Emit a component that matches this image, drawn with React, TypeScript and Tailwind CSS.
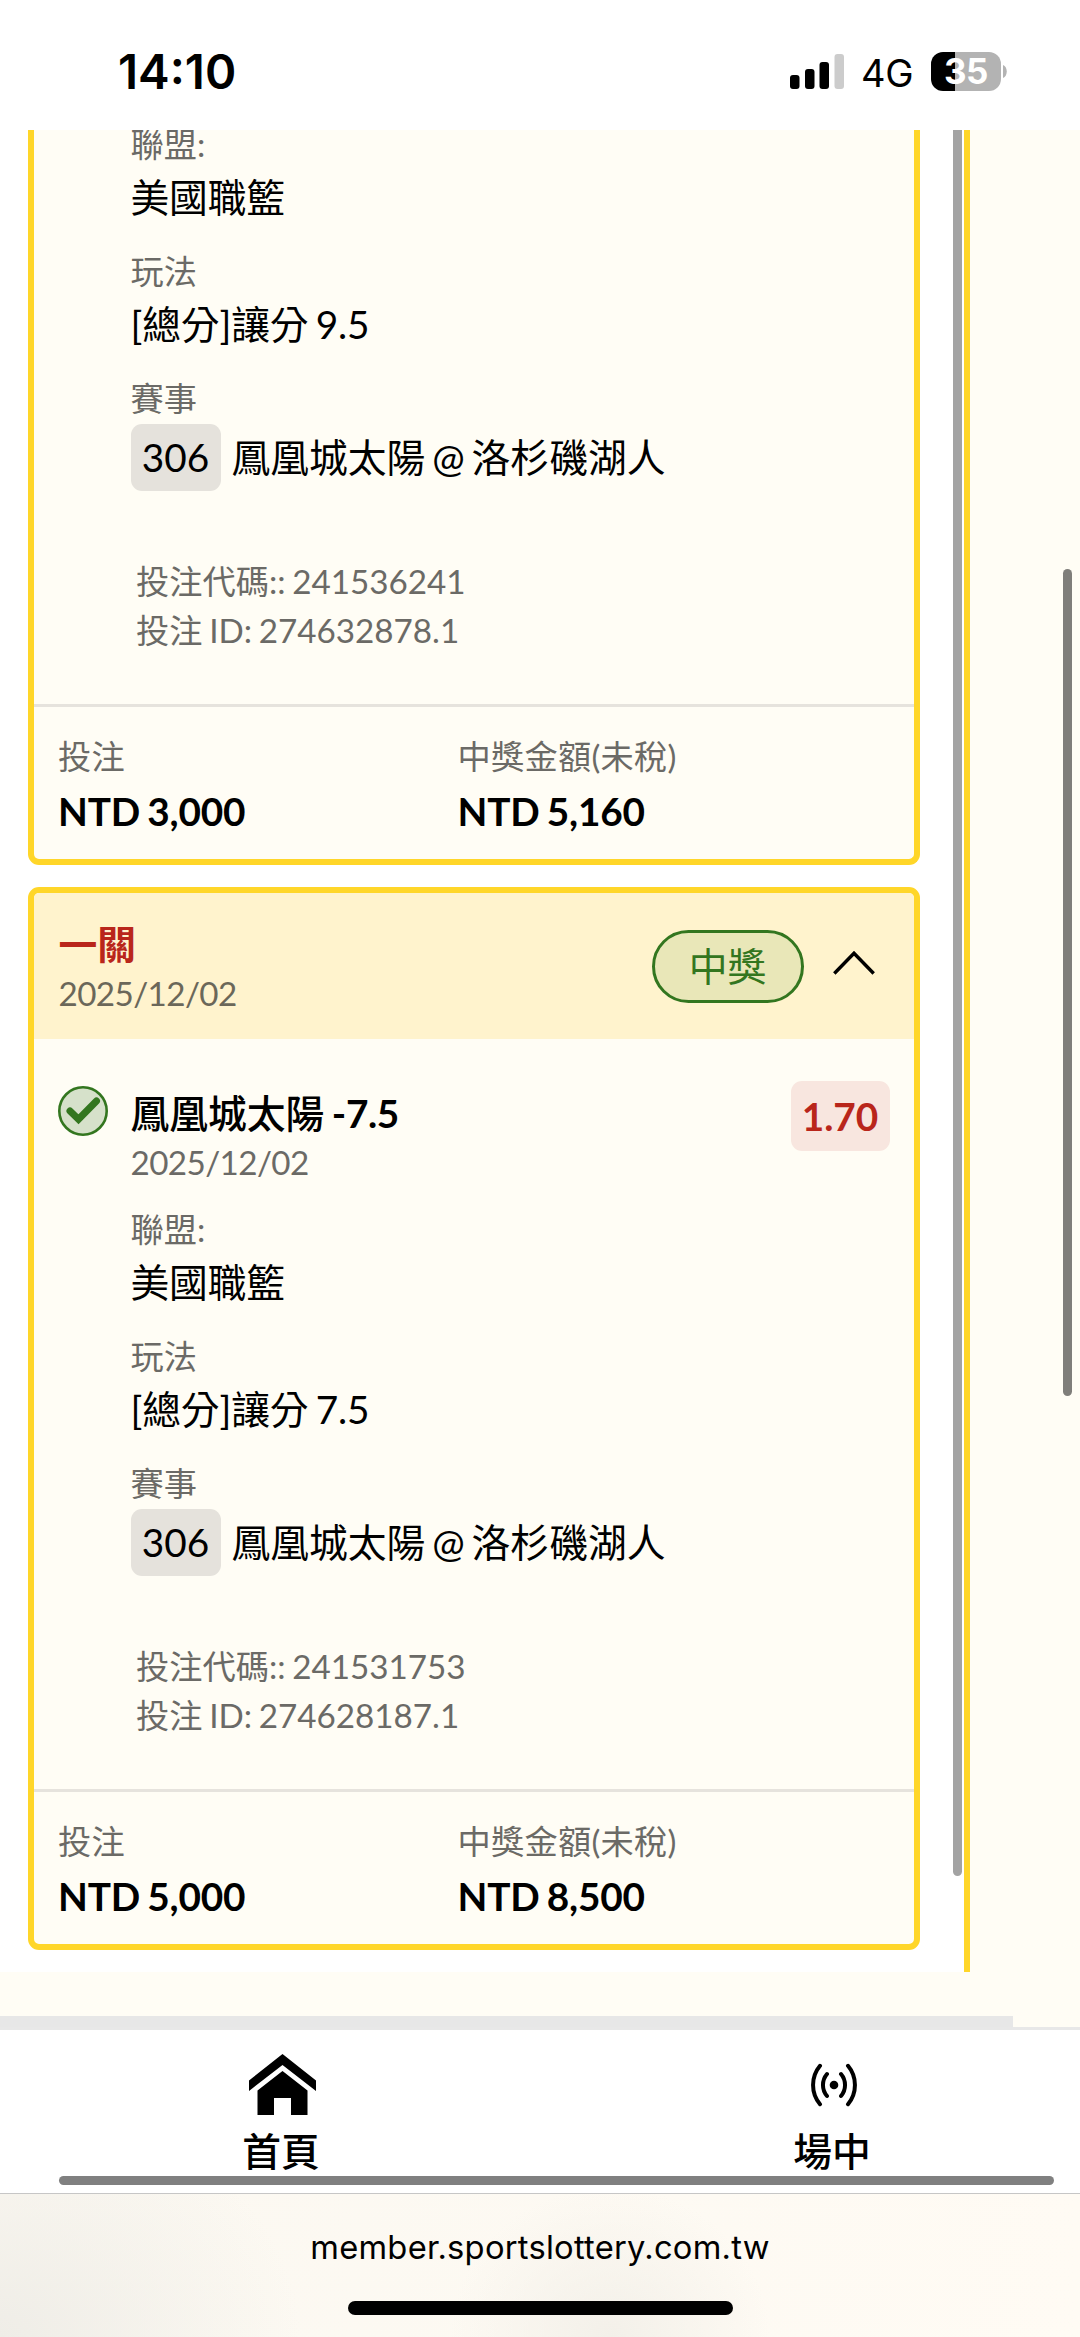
import type { ReactNode } from 'react'

type Apuesta = {
  handicap: string
  codigo: string
  betId: string
  monto: string
  premio: string
}

const apuestas: Apuesta[] = [
  { handicap: '9.5', codigo: '241536241', betId: '274632878.1', monto: '3,000', premio: '5,160' },
  { handicap: '7.5', codigo: '241531753', betId: '274628187.1', monto: '5,000', premio: '8,500' },
]

export default function App() {
  const [primera, segunda] = apuestas

  return (
    <div className="w-[1080px] h-[2337px] overflow-hidden flex flex-col bg-[#fffdf5] text-black font-['Lato','Noto_Sans_CJK_TC',sans-serif]">
      <StatusBar />

      <main className="relative h-[1897px] shrink-0 flex flex-col">
        <div className="flex h-[1842px] overflow-hidden">
          <div className="w-[964px] shrink-0 bg-white pl-[27.5px] flex">
            <div className="w-[892px] shrink-0">
              {/* la primera tarjeta queda cortada por el scroll */}
              <article className="-mt-[9px] h-[743.5px] bg-[#fffdf5] border-[6px] border-t-0 border-[#ffd629] rounded-b-[11px] overflow-hidden">
                <div className="pl-[97px]">
                  <Detalle apuesta={primera} />
                </div>
                <Totales apuesta={primera} />
              </article>

              <article className="mt-[22.5px] h-[1063px] bg-[#fffdf5] border-[6px] border-[#ffd629] rounded-[11px] overflow-hidden">
                <header className="h-[146px] bg-[#fff3cd] pl-[25px] pr-[39px] flex items-center justify-between">
                  <div>
                    <p className="text-[38.77px] leading-[54px] font-bold text-[#b9261b]">一關</p>
                    <p className="text-[33.23px] leading-[44px] tracking-[-0.6px] text-[#6b6759]">2025/12/02</p>
                  </div>
                  <div className="flex items-center gap-[29px]">
                    <span className="w-[152px] h-[73px] rounded-full border-[3px] border-[#33761f] bg-[#e9e7b8] text-[#33761f] text-[38.77px] leading-[66px] text-center">中獎</span>
                    <svg width="42" height="25" viewBox="0 0 42 25" fill="none" stroke="#000" strokeWidth="3.4" className="-mt-2">
                      <path d="M1.3 23.5 21 3.2 40.7 23.5" />
                    </svg>
                  </div>
                </header>

                <div className="pt-[45px] pl-[24px] pr-[24px] flex items-start">
                  <Acierto />
                  <div className="ml-[23px] flex-1">
                    <h2 className="text-[38.77px] leading-[58px] font-bold">
                      <span className="font-medium">鳳凰城太陽</span>
                      <span className="tracking-[-0.4px] [word-spacing:-1.5px]"> -7.5</span>
                    </h2>
                    <p className="text-[33.23px] leading-[40px] mb-[24px] tracking-[-0.6px] text-[#6b6a66]">2025/12/02</p>
                    <Detalle apuesta={segunda} />
                  </div>
                  <span className="-mt-[3px] w-[99px] h-[70px] rounded-[11px] bg-[#f8e6df] text-[#b9261b] text-[38.77px] leading-[70px] font-bold text-center">1.70</span>
                </div>
                <Totales apuesta={segunda} />
              </article>
            </div>
            <div className="ml-[33.5px] w-[8.5px] h-[1746px] rounded-b-full bg-[#a3a3a3]" />
          </div>
          <div className="w-[6px] bg-[#ffd629]" />
        </div>
        <div className="mt-[44px] h-[11px] w-[1013px] bg-[#e7e7e7]" />

        {/* scroll de la pagina */}
        <div className="absolute right-[8px] top-[439px] w-[9px] h-[827px] rounded-full bg-[#7f7e7a]" />
      </main>

      <nav className="relative h-[167px] shrink-0 bg-white border-t-[3px] border-t-[#e8e8e8] border-b border-b-[#c6c6c6] flex">
        <Pestana texto="首頁" className="ml-[181px]">
          <svg width="67" height="61" viewBox="0 0 67 61" fill="#000" className="ml-[3px]">
            <path d="M33.5 0 67 26.5V37L33.5 11 0 37V26.5Z" />
            <path d="M33.5 17 58.5 36.5V61H42V44H25V61H8.500V36.5Z" />
          </svg>
        </Pestana>
        <Pestana texto="場中" className="ml-[351px]">
          <svg width="52" height="44" viewBox="0 0 52 44" fill="none" stroke="#000" strokeWidth="4" strokeLinecap="round" className="ml-[4px] mt-[9px]">
            <circle cx="26" cy="22" r="4.3" fill="#000" stroke="none" />
            <path d="M19 11a17 17 0 0 0 0 22M33 11a17 17 0 0 1 0 22M12 2.8a30 30 0 0 0 0 38.4M40 2.8a30 30 0 0 1 0 38.4" />
          </svg>
        </Pestana>
        <div className="absolute left-[59px] top-[146px] w-[995px] h-[9px] rounded-full bg-[#808080]" />
      </nav>

      <footer className="h-[143px] shrink-0 flex flex-col items-center bg-[radial-gradient(ellipse_300px_240px_at_0%_100%,#efede7,transparent),radial-gradient(ellipse_160px_150px_at_610px_143px,#f3f0e9,transparent),linear-gradient(90deg,#fbf8f1,#fffbf4)]">
        <p className="mt-[31px] font-['Inter',sans-serif] text-[32.7px] leading-[44px] tracking-[0.25px]">member.sportslottery.com.tw</p>
        <div className="mt-[32px] w-[385px] h-[14px] rounded-full bg-black" />
      </footer>
    </div>
  )
}

function StatusBar() {
  return (
    <header className="h-[130px] shrink-0 bg-white pl-[118px] pr-[73px] flex items-start justify-between font-['Inter',sans-serif]">
      <span className="mt-[42px] text-[47.5px] leading-[60px] font-semibold">14:10</span>
      <div className="mt-[52px] flex items-start">
        <svg width="54" height="37" viewBox="0 0 54 37">
          <rect x="0" y="23" width="9.5" height="14" rx="3" />
          <rect x="15" y="17" width="9.5" height="20" rx="3" />
          <rect x="29.5" y="10" width="9.5" height="27" rx="3" />
          <rect x="44.5" y="2" width="9.5" height="35" rx="3" fill="#cccccc" />
        </svg>
        <span className="ml-[17px] mt-[1px] w-[53px] text-[38px] leading-[40px] tracking-[-0.2px]">4G</span>
        <div className="ml-[17px] w-[70px] h-[39px] rounded-[12px] bg-[linear-gradient(90deg,#000_35%,#b3b3b3_35%)] text-white text-[35px] leading-[38px] font-bold tracking-[-0.5px] text-center">35</div>
        <svg width="4" height="13" viewBox="0 0 4 13" className="ml-[2px] mt-[13px]">
          <path d="M0 0C5 2 5 11 0 13Z" fill="#b3b3b3" />
        </svg>
      </div>
    </header>
  )
}

function Detalle({ apuesta }: { apuesta: Apuesta }) {
  return (
    <div>
      <Campo label="聯盟:">美國職籃</Campo>
      <Campo label="玩法">[總分]讓分 {apuesta.handicap}</Campo>
      <p className="mt-[21.5px] text-[33.23px] leading-[46px] text-[#6b6a66]">賽事</p>
      <div className="mt-[3px] flex items-center text-[38.77px] leading-[67px]">
        <span className="w-[90px] h-[67px] rounded-[11px] bg-[#e5e2dc] text-center">306</span>
        <span className="ml-[11px] [word-spacing:-3px]">鳳凰城太陽 @ 洛杉磯湖人</span>
      </div>
      <div className="mt-[66px] mb-[49px] pl-[5.5px] text-[33.23px] leading-[49px] [word-spacing:-1.8px] text-[#6b6a66]">
        <p>投注代碼:: {apuesta.codigo}</p>
        <p>投注 ID: {apuesta.betId}</p>
      </div>
    </div>
  )
}

function Campo({ label, children }: { label: string; children: ReactNode }) {
  return (
    <div className="mb-[20.5px]">
      <p className="text-[33.23px] leading-[46px] text-[#6b6a66]">{label}</p>
      <p className="text-[38.77px] leading-[60px] tracking-[-0.15px] [word-spacing:-2.5px]">{children}</p>
    </div>
  )
}

function Totales({ apuesta }: { apuesta: Apuesta }) {
  return (
    <div className="border-t-[3px] border-[#e6e3dd] pt-[26px] pl-[24.5px] flex">
      <Total label="投注" monto={apuesta.monto} />
      <Total label="中獎金額(未稅)" monto={apuesta.premio} />
    </div>
  )
}

function Total({ label, monto }: { label: string; monto: string }) {
  return (
    <div className="w-[399.5px]">
      <p className="text-[33.23px] leading-[46px] tracking-[0.25px] text-[#6b6a66]">{label}</p>
      <p className="mt-[2px] text-[38.77px] leading-[60px] font-bold tracking-[-0.2px] [word-spacing:-2px]">NTD {monto}</p>
    </div>
  )
}

function Acierto() {
  return (
    <svg width="50" height="50" viewBox="0 0 50 50" className="mt-[2px]">
      <circle cx="25" cy="25" r="23.7" fill="#d6e1ca" stroke="#33761f" strokeWidth="2.6" />
      <path d="M12 25 20.5 33.3 38.5 15" fill="none" stroke="#33761f" strokeWidth="7" strokeLinecap="round" />
    </svg>
  )
}

function Pestana({ texto, className, children }: { texto: string; className: string; children: ReactNode }) {
  return (
    <div className={`w-[200px] pt-[24px] flex flex-col items-center ${className}`}>
      <div className="h-[69px]">{children}</div>
      <p className="text-[38.77px] leading-[56px] font-medium">{texto}</p>
    </div>
  )
}
